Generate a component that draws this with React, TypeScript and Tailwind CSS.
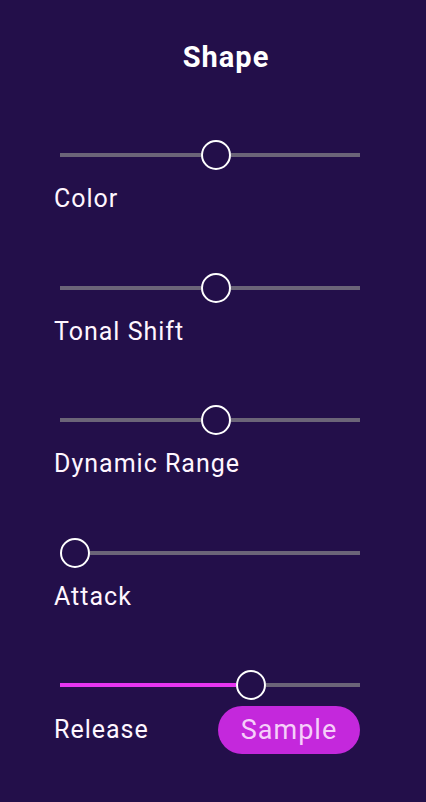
import React from "react";

type S = { label: string; thumb: number };

const sliders: S[] = [
  { label: "Color", thumb: 141 },
  { label: "Tonal Shift", thumb: 141 },
  { label: "Dynamic Range", thumb: 141 },
  { label: "Attack", thumb: 0 },
];

function Slider({ thumb, active }: { thumb: number; active?: boolean }) {
  return (
    <div className="flex items-center h-[30px] w-[300px] ml-[60px]">
      <div
        className={active ? "h-[4px] bg-[#e535f0]" : "h-[4px] bg-[#6b6478]"}
        style={{ width: thumb }}
      />
      <div className="h-[30px] w-[30px] shrink-0 rounded-full border-2 border-white bg-[#230f4a]" />
      <div className="h-[4px] flex-1 bg-[#6b6478]" />
    </div>
  );
}

const label = "text-[25px] leading-[30px] tracking-[1px] text-[#fff6ff]";

export default function App() {
  return (
    <div
      className="w-[426px] h-[802px] bg-[#230f4a] text-white overflow-hidden pt-[40px] flex flex-col"
      style={{ fontFamily: "Roboto, 'Noto Sans', sans-serif" }}
    >
      <div className="h-[34px] text-center pl-[26px] text-[29px] leading-[34px] tracking-[1px] font-bold">
        Shape
      </div>
      <div className="mt-[66px] flex flex-col gap-[58.5px]">
        {sliders.map((s, i) => (
          <div key={i} className="flex flex-col gap-[14px]">
            <Slider thumb={s.thumb} />
            <div className={"pl-[54px] " + label}>{s.label}</div>
          </div>
        ))}
        <div className="flex flex-col gap-[6px]">
          <Slider thumb={176} active />
          <div className="flex items-center justify-between pl-[54px] w-[360px]">
            <div className={label}>Release</div>
            <div className="h-[48px] w-[142px] rounded-full bg-[#c428dc] flex items-center justify-center text-[27px] tracking-[1px] text-[#f6cffa]">
              Sample
            </div>
          </div>
        </div>
      </div>
    </div>
  );
}
